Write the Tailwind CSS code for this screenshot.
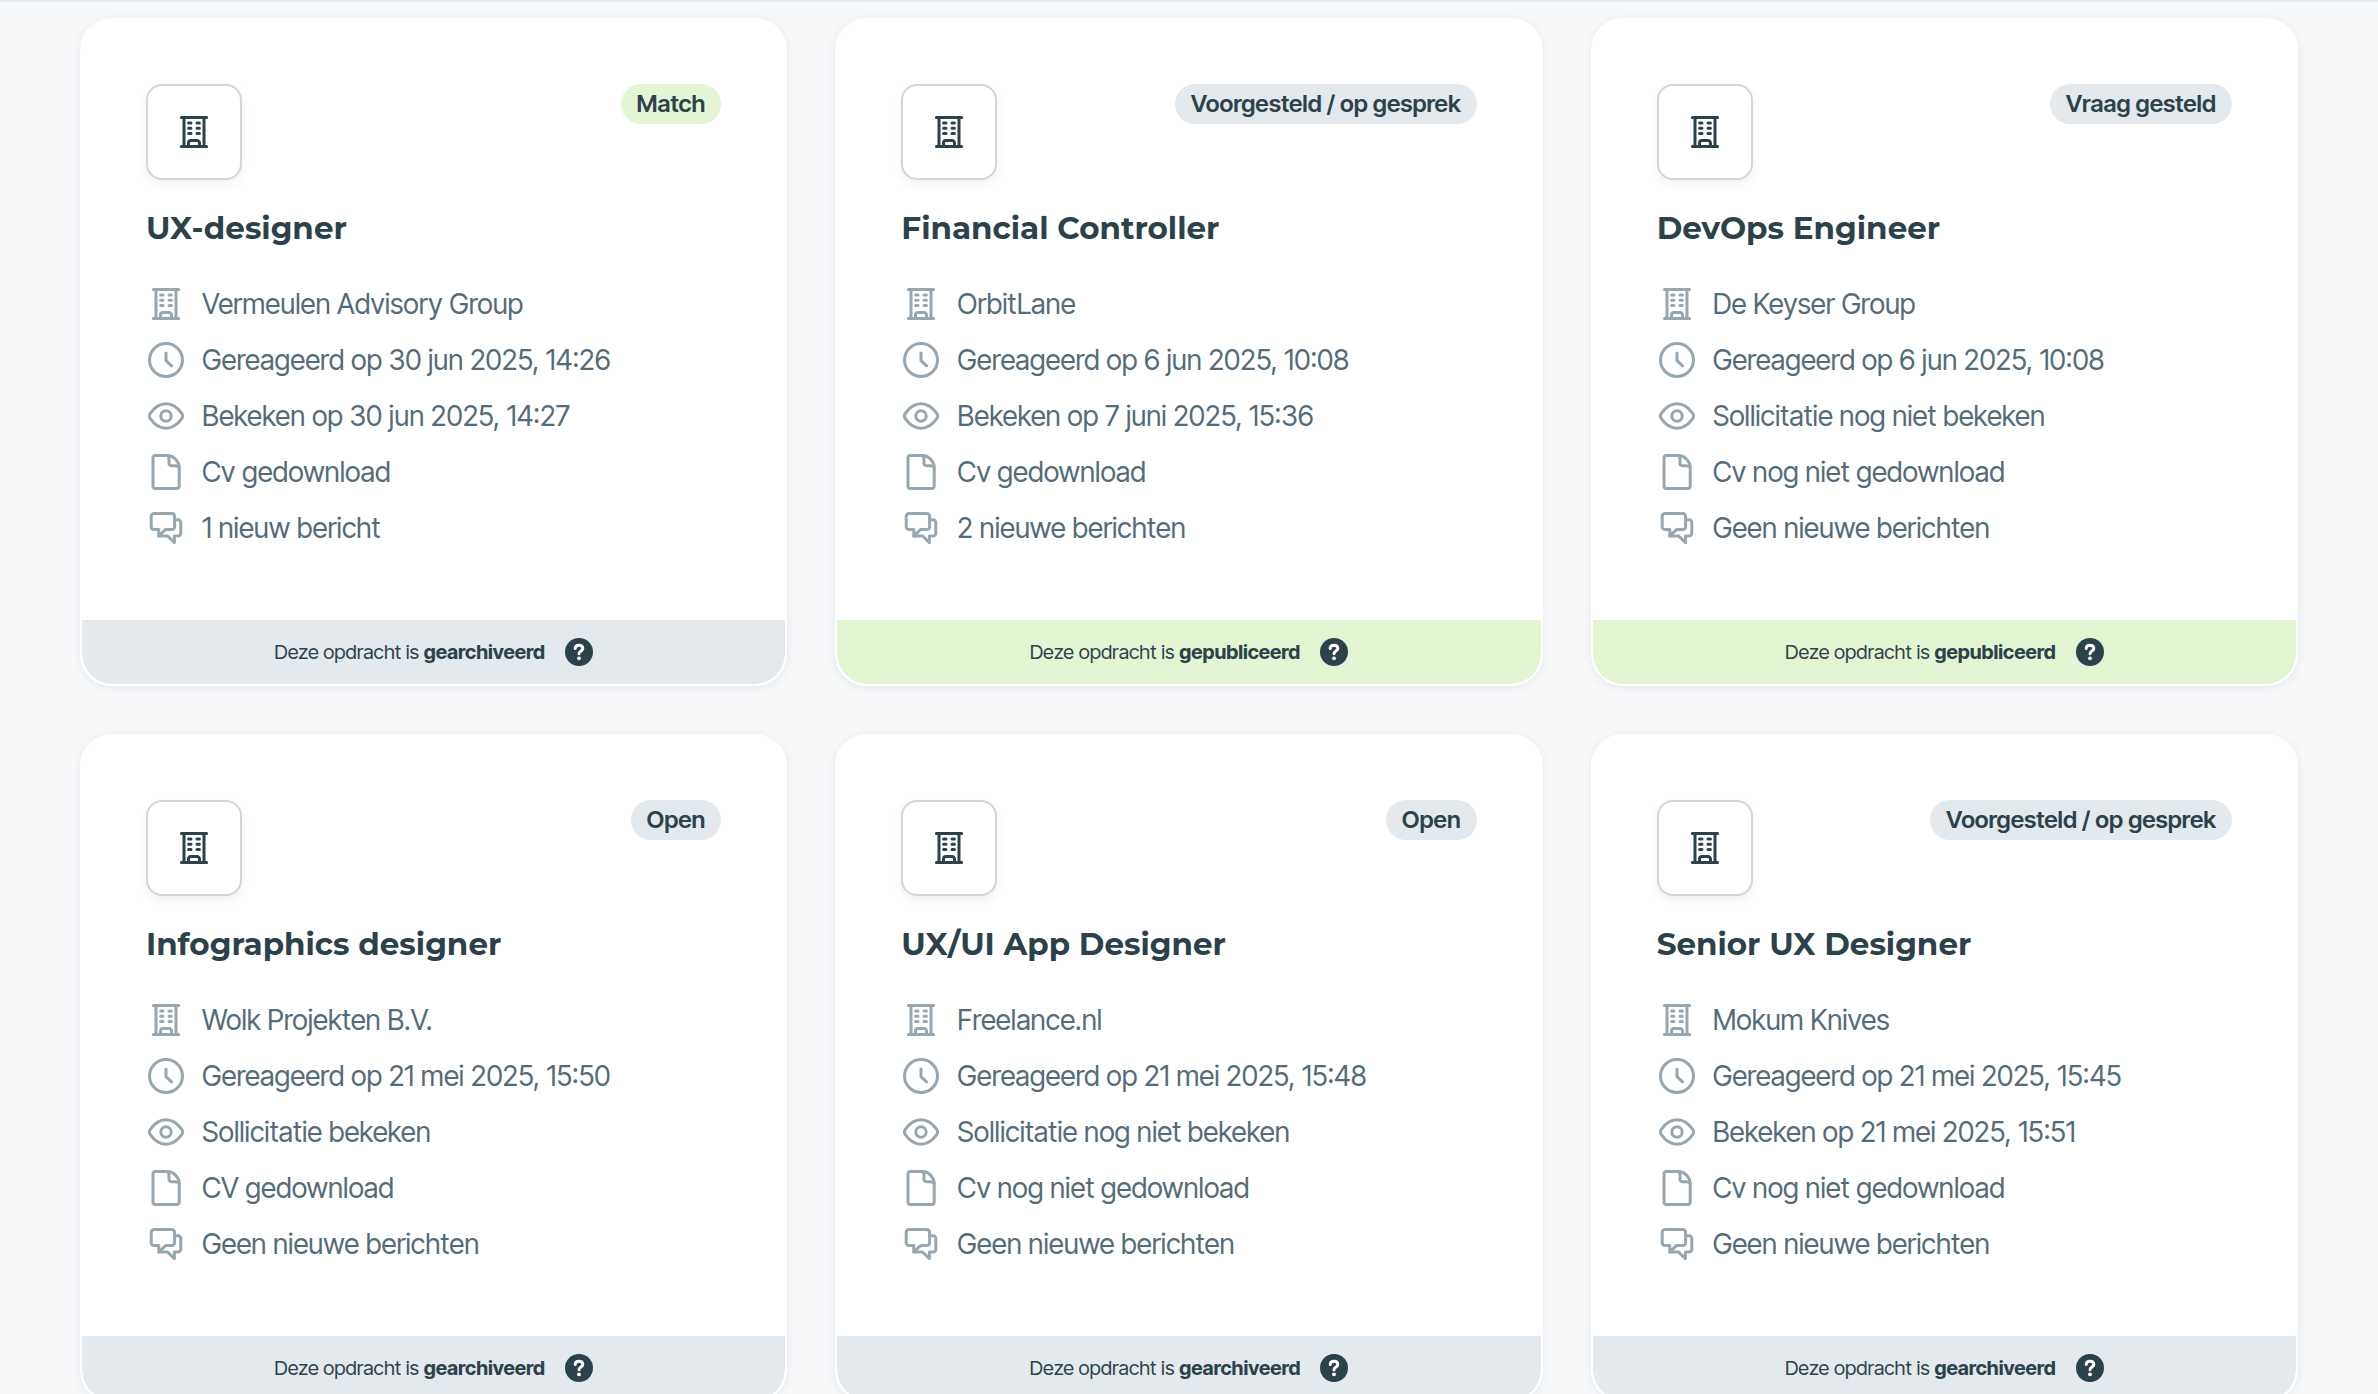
<!DOCTYPE html>
<html lang="nl">

<head>
    <meta charset="UTF-8" />
    <meta name="viewport" content="width=device-width, initial-scale=1.0" />
    <title>Mijn reacties</title>
    <script src="https://cdn.jsdelivr.net/npm/@tailwindcss/browser@4"></script>
</head>

<body class="bg-[#f7f8fa] font-['Inter_Tight','Inter',sans-serif] text-[#2c424b] border-t-2 border-[#e3e9ee] min-h-screen">

    <!-- Icons -->
    <svg class="hidden" aria-hidden="true">
        <symbol id="icon-building" viewBox="0 0 36 36" fill="none" stroke="currentColor" stroke-linecap="round" stroke-linejoin="round">
            <path d="M5.400 3.500h25.200M5.400 32.500h25.200M8 3.500v29M28 3.500v29M12.500 32.500v-3.500a2.500 2.500 0 0 1 2.500-2.500h6a2.500 2.500 0 0 1 2.500 2.500v3.500" />
            <path d="M12.600 9h2.400M21 9h2.400M12.600 14.300h2.400M21 14.300h2.400M12.600 19.600h2.400M21 19.600h2.400" />
        </symbol>
        <symbol id="icon-clock" viewBox="0 0 36 36" fill="none" stroke="currentColor" stroke-linecap="round" stroke-linejoin="round">
            <circle cx="18" cy="18" r="16.500" />
            <path d="M18 11v7.600l5.600 5.200" />
        </symbol>
        <symbol id="icon-eye" viewBox="0 0 36 36" fill="none" stroke="currentColor" stroke-linecap="round" stroke-linejoin="round">
            <path d="M18 5.800c6.200 0 11.900 4.200 15.700 9.600 1.100 1.600 1.100 3.600 0 5.200C29.900 26 24.200 30.200 18 30.200S6.100 26 2.300 20.600c-1.100-1.600-1.100-3.600 0-5.200C6.100 10 11.800 5.800 18 5.800z" />
            <circle cx="18" cy="18" r="5.200" />
        </symbol>
        <symbol id="icon-file" viewBox="0 0 36 36" fill="none" stroke="currentColor" stroke-linecap="round" stroke-linejoin="round">
            <path d="M7.200 1.500H19.500c6 0 11.700 6 11.700 12v18.800a2.200 2.200 0 0 1-2.200 2.200H7.200A2.200 2.200 0 0 1 5 32.300V3.700A2.200 2.200 0 0 1 7.200 1.500z" />
            <path d="M19.500 1.500c1.400.8 1.500 2 1.500 4v4a2.200 2.200 0 0 0 2.200 2.200h3.800c2 0 3.400.2 4.200 1.600" />
        </symbol>
        <symbol id="icon-chat" viewBox="0 0 36 36" fill="none" stroke="currentColor" stroke-linecap="round" stroke-linejoin="round">
            <path d="M6 3.500H23.800a2.800 2.800 0 0 1 2.800 2.800V16.800a2.800 2.800 0 0 1-2.800 2.800H17.500L10.800 26V19.600H6a2.800 2.800 0 0 1-2.800-2.800V6.300A2.800 2.800 0 0 1 6 3.500z" />
            <path d="M26.600 9.800h3.400a2.800 2.800 0 0 1 2.800 2.800V23.200a2.800 2.800 0 0 1-2.800 2.800H26.400v6.600L19.600 26H10.800" />
        </symbol>
        <symbol id="icon-help" viewBox="0 0 28 28">
            <circle cx="14" cy="14" r="14" fill="currentColor" />
            <path d="M10.200 10.500c0-2 1.600-3.300 3.800-3.300s3.800 1.300 3.800 3.200c0 2.600-3.800 2.600-3.800 5.300" fill="none" stroke="#fff" stroke-width="3" stroke-linecap="round" stroke-linejoin="round" />
            <circle cx="14" cy="20.300" r="1.900" fill="#fff" />
        </symbol>
    </svg>

    <main class="px-20 pt-4 pb-20">
        <div class="grid grid-cols-3 gap-12">

            <!-- UX-designer -->
            <article class="bg-white border-2 border-white rounded-[32px] shadow-[0_2px_8px_rgba(44,66,75,0.09)] overflow-hidden flex flex-col">
                <div class="px-16 pt-16 pb-18 flex-grow">
                    <div class="flex justify-between items-start">
                        <div class="size-24 flex items-center justify-center bg-white border-2 border-[#cfd6de] rounded-2xl shadow-[0_4px_8px_rgba(44,66,75,0.07)]">
                            <svg class="size-9 stroke-3"><use href="#icon-building" /></svg>
                        </div>
                        <span class="h-10 px-4 rounded-full bg-[#e4f5d4] text-2xl/10 font-semibold">Match</span>
                    </div>
                    <h2 class="mt-7 text-[31px]/10 font-bold font-['Montserrat','Inter',sans-serif]">UX-designer</h2>
                    <ul class="mt-9 space-y-4 text-[28px]/10 text-[#546c79]">
                        <li class="flex items-center gap-4">
                            <span class="w-10 flex justify-center text-[#98a6b0]"><svg class="size-9 stroke-3"><use href="#icon-building" /></svg></span>
                            Vermeulen Advisory Group
                        </li>
                        <li class="flex items-center gap-4">
                            <span class="w-10 flex justify-center text-[#98a6b0]"><svg class="size-9 stroke-3"><use href="#icon-clock" /></svg></span>
                            Gereageerd op 30 jun 2025, 14:26
                        </li>
                        <li class="flex items-center gap-4">
                            <span class="w-10 flex justify-center text-[#98a6b0]"><svg class="size-9 stroke-3"><use href="#icon-eye" /></svg></span>
                            Bekeken op 30 jun 2025, 14:27
                        </li>
                        <li class="flex items-center gap-4">
                            <span class="w-10 flex justify-center text-[#98a6b0]"><svg class="size-9 stroke-3"><use href="#icon-file" /></svg></span>
                            Cv gedownload
                        </li>
                        <li class="flex items-center gap-4">
                            <span class="w-10 flex justify-center text-[#98a6b0]"><svg class="size-9 stroke-3"><use href="#icon-chat" /></svg></span>
                            1 nieuw bericht
                        </li>
                    </ul>
                </div>
                <div class="h-16 flex items-center justify-center gap-5 rounded-b-[30px] bg-[#e4e9ed] text-xl">
                    <p>Deze opdracht is <strong class="font-bold">gearchiveerd</strong></p>
                    <button type="button" aria-label="Uitleg"><svg class="size-7"><use href="#icon-help" /></svg></button>
                </div>
            </article>

            <!-- Financial Controller -->
            <article class="bg-white border-2 border-white rounded-[32px] shadow-[0_2px_8px_rgba(44,66,75,0.09)] overflow-hidden flex flex-col">
                <div class="px-16 pt-16 pb-18 flex-grow">
                    <div class="flex justify-between items-start">
                        <div class="size-24 flex items-center justify-center bg-white border-2 border-[#cfd6de] rounded-2xl shadow-[0_4px_8px_rgba(44,66,75,0.07)]">
                            <svg class="size-9 stroke-3"><use href="#icon-building" /></svg>
                        </div>
                        <span class="h-10 px-4 rounded-full bg-[#e4e9ed] text-2xl/10 font-semibold">Voorgesteld / op gesprek</span>
                    </div>
                    <h2 class="mt-7 text-[31px]/10 font-bold font-['Montserrat','Inter',sans-serif]">Financial Controller</h2>
                    <ul class="mt-9 space-y-4 text-[28px]/10 text-[#546c79]">
                        <li class="flex items-center gap-4">
                            <span class="w-10 flex justify-center text-[#98a6b0]"><svg class="size-9 stroke-3"><use href="#icon-building" /></svg></span>
                            OrbitLane
                        </li>
                        <li class="flex items-center gap-4">
                            <span class="w-10 flex justify-center text-[#98a6b0]"><svg class="size-9 stroke-3"><use href="#icon-clock" /></svg></span>
                            Gereageerd op 6 jun 2025, 10:08
                        </li>
                        <li class="flex items-center gap-4">
                            <span class="w-10 flex justify-center text-[#98a6b0]"><svg class="size-9 stroke-3"><use href="#icon-eye" /></svg></span>
                            Bekeken op 7 juni 2025, 15:36
                        </li>
                        <li class="flex items-center gap-4">
                            <span class="w-10 flex justify-center text-[#98a6b0]"><svg class="size-9 stroke-3"><use href="#icon-file" /></svg></span>
                            Cv gedownload
                        </li>
                        <li class="flex items-center gap-4">
                            <span class="w-10 flex justify-center text-[#98a6b0]"><svg class="size-9 stroke-3"><use href="#icon-chat" /></svg></span>
                            2 nieuwe berichten
                        </li>
                    </ul>
                </div>
                <div class="h-16 flex items-center justify-center gap-5 rounded-b-[30px] bg-[#e4f5d4] text-xl">
                    <p>Deze opdracht is <strong class="font-bold">gepubliceerd</strong></p>
                    <button type="button" aria-label="Uitleg"><svg class="size-7"><use href="#icon-help" /></svg></button>
                </div>
            </article>

            <!-- DevOps Engineer -->
            <article class="bg-white border-2 border-white rounded-[32px] shadow-[0_2px_8px_rgba(44,66,75,0.09)] overflow-hidden flex flex-col">
                <div class="px-16 pt-16 pb-18 flex-grow">
                    <div class="flex justify-between items-start">
                        <div class="size-24 flex items-center justify-center bg-white border-2 border-[#cfd6de] rounded-2xl shadow-[0_4px_8px_rgba(44,66,75,0.07)]">
                            <svg class="size-9 stroke-3"><use href="#icon-building" /></svg>
                        </div>
                        <span class="h-10 px-4 rounded-full bg-[#e4e9ed] text-2xl/10 font-semibold">Vraag gesteld</span>
                    </div>
                    <h2 class="mt-7 text-[31px]/10 font-bold font-['Montserrat','Inter',sans-serif]">DevOps Engineer</h2>
                    <ul class="mt-9 space-y-4 text-[28px]/10 text-[#546c79]">
                        <li class="flex items-center gap-4">
                            <span class="w-10 flex justify-center text-[#98a6b0]"><svg class="size-9 stroke-3"><use href="#icon-building" /></svg></span>
                            De Keyser Group
                        </li>
                        <li class="flex items-center gap-4">
                            <span class="w-10 flex justify-center text-[#98a6b0]"><svg class="size-9 stroke-3"><use href="#icon-clock" /></svg></span>
                            Gereageerd op 6 jun 2025, 10:08
                        </li>
                        <li class="flex items-center gap-4">
                            <span class="w-10 flex justify-center text-[#98a6b0]"><svg class="size-9 stroke-3"><use href="#icon-eye" /></svg></span>
                            Sollicitatie nog niet bekeken
                        </li>
                        <li class="flex items-center gap-4">
                            <span class="w-10 flex justify-center text-[#98a6b0]"><svg class="size-9 stroke-3"><use href="#icon-file" /></svg></span>
                            Cv nog niet gedownload
                        </li>
                        <li class="flex items-center gap-4">
                            <span class="w-10 flex justify-center text-[#98a6b0]"><svg class="size-9 stroke-3"><use href="#icon-chat" /></svg></span>
                            Geen nieuwe berichten
                        </li>
                    </ul>
                </div>
                <div class="h-16 flex items-center justify-center gap-5 rounded-b-[30px] bg-[#e4f5d4] text-xl">
                    <p>Deze opdracht is <strong class="font-bold">gepubliceerd</strong></p>
                    <button type="button" aria-label="Uitleg"><svg class="size-7"><use href="#icon-help" /></svg></button>
                </div>
            </article>

            <!-- Infographics designer -->
            <article class="bg-white border-2 border-white rounded-[32px] shadow-[0_2px_8px_rgba(44,66,75,0.09)] overflow-hidden flex flex-col">
                <div class="px-16 pt-16 pb-18 flex-grow">
                    <div class="flex justify-between items-start">
                        <div class="size-24 flex items-center justify-center bg-white border-2 border-[#cfd6de] rounded-2xl shadow-[0_4px_8px_rgba(44,66,75,0.07)]">
                            <svg class="size-9 stroke-3"><use href="#icon-building" /></svg>
                        </div>
                        <span class="h-10 px-4 rounded-full bg-[#e4e9ed] text-2xl/10 font-semibold">Open</span>
                    </div>
                    <h2 class="mt-7 text-[31px]/10 font-bold font-['Montserrat','Inter',sans-serif]">Infographics designer</h2>
                    <ul class="mt-9 space-y-4 text-[28px]/10 text-[#546c79]">
                        <li class="flex items-center gap-4">
                            <span class="w-10 flex justify-center text-[#98a6b0]"><svg class="size-9 stroke-3"><use href="#icon-building" /></svg></span>
                            Wolk Projekten B.V.
                        </li>
                        <li class="flex items-center gap-4">
                            <span class="w-10 flex justify-center text-[#98a6b0]"><svg class="size-9 stroke-3"><use href="#icon-clock" /></svg></span>
                            Gereageerd op 21 mei 2025, 15:50
                        </li>
                        <li class="flex items-center gap-4">
                            <span class="w-10 flex justify-center text-[#98a6b0]"><svg class="size-9 stroke-3"><use href="#icon-eye" /></svg></span>
                            Sollicitatie bekeken
                        </li>
                        <li class="flex items-center gap-4">
                            <span class="w-10 flex justify-center text-[#98a6b0]"><svg class="size-9 stroke-3"><use href="#icon-file" /></svg></span>
                            CV gedownload
                        </li>
                        <li class="flex items-center gap-4">
                            <span class="w-10 flex justify-center text-[#98a6b0]"><svg class="size-9 stroke-3"><use href="#icon-chat" /></svg></span>
                            Geen nieuwe berichten
                        </li>
                    </ul>
                </div>
                <div class="h-16 flex items-center justify-center gap-5 rounded-b-[30px] bg-[#e4e9ed] text-xl">
                    <p>Deze opdracht is <strong class="font-bold">gearchiveerd</strong></p>
                    <button type="button" aria-label="Uitleg"><svg class="size-7"><use href="#icon-help" /></svg></button>
                </div>
            </article>

            <!-- UX/UI App Designer -->
            <article class="bg-white border-2 border-white rounded-[32px] shadow-[0_2px_8px_rgba(44,66,75,0.09)] overflow-hidden flex flex-col">
                <div class="px-16 pt-16 pb-18 flex-grow">
                    <div class="flex justify-between items-start">
                        <div class="size-24 flex items-center justify-center bg-white border-2 border-[#cfd6de] rounded-2xl shadow-[0_4px_8px_rgba(44,66,75,0.07)]">
                            <svg class="size-9 stroke-3"><use href="#icon-building" /></svg>
                        </div>
                        <span class="h-10 px-4 rounded-full bg-[#e4e9ed] text-2xl/10 font-semibold">Open</span>
                    </div>
                    <h2 class="mt-7 text-[31px]/10 font-bold font-['Montserrat','Inter',sans-serif]">UX/UI App Designer</h2>
                    <ul class="mt-9 space-y-4 text-[28px]/10 text-[#546c79]">
                        <li class="flex items-center gap-4">
                            <span class="w-10 flex justify-center text-[#98a6b0]"><svg class="size-9 stroke-3"><use href="#icon-building" /></svg></span>
                            Freelance.nl
                        </li>
                        <li class="flex items-center gap-4">
                            <span class="w-10 flex justify-center text-[#98a6b0]"><svg class="size-9 stroke-3"><use href="#icon-clock" /></svg></span>
                            Gereageerd op 21 mei 2025, 15:48
                        </li>
                        <li class="flex items-center gap-4">
                            <span class="w-10 flex justify-center text-[#98a6b0]"><svg class="size-9 stroke-3"><use href="#icon-eye" /></svg></span>
                            Sollicitatie nog niet bekeken
                        </li>
                        <li class="flex items-center gap-4">
                            <span class="w-10 flex justify-center text-[#98a6b0]"><svg class="size-9 stroke-3"><use href="#icon-file" /></svg></span>
                            Cv nog niet gedownload
                        </li>
                        <li class="flex items-center gap-4">
                            <span class="w-10 flex justify-center text-[#98a6b0]"><svg class="size-9 stroke-3"><use href="#icon-chat" /></svg></span>
                            Geen nieuwe berichten
                        </li>
                    </ul>
                </div>
                <div class="h-16 flex items-center justify-center gap-5 rounded-b-[30px] bg-[#e4e9ed] text-xl">
                    <p>Deze opdracht is <strong class="font-bold">gearchiveerd</strong></p>
                    <button type="button" aria-label="Uitleg"><svg class="size-7"><use href="#icon-help" /></svg></button>
                </div>
            </article>

            <!-- Senior UX Designer -->
            <article class="bg-white border-2 border-white rounded-[32px] shadow-[0_2px_8px_rgba(44,66,75,0.09)] overflow-hidden flex flex-col">
                <div class="px-16 pt-16 pb-18 flex-grow">
                    <div class="flex justify-between items-start">
                        <div class="size-24 flex items-center justify-center bg-white border-2 border-[#cfd6de] rounded-2xl shadow-[0_4px_8px_rgba(44,66,75,0.07)]">
                            <svg class="size-9 stroke-3"><use href="#icon-building" /></svg>
                        </div>
                        <span class="h-10 px-4 rounded-full bg-[#e4e9ed] text-2xl/10 font-semibold">Voorgesteld / op gesprek</span>
                    </div>
                    <h2 class="mt-7 text-[31px]/10 font-bold font-['Montserrat','Inter',sans-serif]">Senior UX Designer</h2>
                    <ul class="mt-9 space-y-4 text-[28px]/10 text-[#546c79]">
                        <li class="flex items-center gap-4">
                            <span class="w-10 flex justify-center text-[#98a6b0]"><svg class="size-9 stroke-3"><use href="#icon-building" /></svg></span>
                            Mokum Knives
                        </li>
                        <li class="flex items-center gap-4">
                            <span class="w-10 flex justify-center text-[#98a6b0]"><svg class="size-9 stroke-3"><use href="#icon-clock" /></svg></span>
                            Gereageerd op 21 mei 2025, 15:45
                        </li>
                        <li class="flex items-center gap-4">
                            <span class="w-10 flex justify-center text-[#98a6b0]"><svg class="size-9 stroke-3"><use href="#icon-eye" /></svg></span>
                            Bekeken op 21 mei 2025, 15:51
                        </li>
                        <li class="flex items-center gap-4">
                            <span class="w-10 flex justify-center text-[#98a6b0]"><svg class="size-9 stroke-3"><use href="#icon-file" /></svg></span>
                            Cv nog niet gedownload
                        </li>
                        <li class="flex items-center gap-4">
                            <span class="w-10 flex justify-center text-[#98a6b0]"><svg class="size-9 stroke-3"><use href="#icon-chat" /></svg></span>
                            Geen nieuwe berichten
                        </li>
                    </ul>
                </div>
                <div class="h-16 flex items-center justify-center gap-5 rounded-b-[30px] bg-[#e4e9ed] text-xl">
                    <p>Deze opdracht is <strong class="font-bold">gearchiveerd</strong></p>
                    <button type="button" aria-label="Uitleg"><svg class="size-7"><use href="#icon-help" /></svg></button>
                </div>
            </article>

        </div>
    </main>

</body>

</html>
